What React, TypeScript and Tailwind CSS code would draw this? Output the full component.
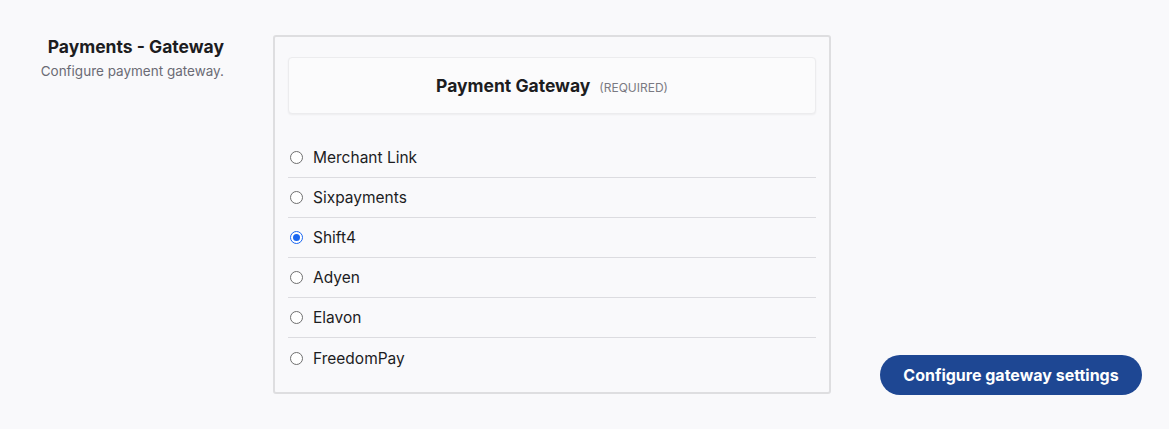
const gateways = ["Merchant Link", "Sixpayments", "Shift4", "Adyen", "Elavon", "FreedomPay"];

const selected = "Shift4";

const Radio = ({ checked }: { checked: boolean }) =>
  checked ? (
    <span className="flex h-[13px] w-[13px] items-center justify-center rounded-full border-[1.5px] border-[#1a66f0] bg-white">
      <span className="h-[7px] w-[7px] rounded-full bg-[#1a66f0]" />
    </span>
  ) : (
    <span className="h-[13px] w-[13px] rounded-full border border-[#6f6f6f] bg-white" />
  );

const App = () => {
  return (
    <div className="min-h-[429px] bg-[#f9f9fb] font-['Inter',sans-serif] text-[#1d1d1f]">
      <div className="flex items-end pt-[35px] pr-[27px]">
        <div className="flex self-start">
          <div className="w-[224px] pt-[1px] text-right">
            <h2 className="text-[17.5px] font-bold leading-[22px] text-[#1d1d1f]">Payments - Gateway</h2>
            <p className="mt-[5px] text-[13.5px] leading-[16px] text-[#6b6b75]">Configure payment gateway.</p>
          </div>
          <div className="ml-[49px] w-[558px] rounded-[3px] border-2 border-[#dedee0] px-[13px] pt-[20px] pb-[14px]">
            <div className="flex h-[57px] items-center justify-center rounded-[4px] border border-[#ececee] bg-[#fbfbfc] shadow-[0_1px_2px_rgba(0,0,0,0.05)]">
              <span className="mt-[2px] text-[17.5px] font-bold text-[#1d1d1f]">Payment Gateway</span>
              <span className="ml-[9px] mt-[4px] text-[12px] text-[#7a7a82]">(REQUIRED)</span>
            </div>
            <div className="mt-[24px]">
              {gateways.map((g, i) => (
                <label
                  key={g}
                  className={`flex h-[40px] items-center gap-[10px] pl-[2px] text-[15.5px] text-[#1d1d1f] ${
                    i < gateways.length - 1 ? "border-b border-[#dcdce0]" : ""
                  }`}
                >
                  <Radio checked={g === selected} />
                  <span className="mt-[1px]">{g}</span>
                </label>
              ))}
            </div>
          </div>
        </div>
        <button className="ml-auto mb-[-1px] h-[40px] w-[262px] rounded-full bg-[#1e4793] text-[16px] font-bold text-white">
          Configure gateway settings
        </button>
      </div>
    </div>
  );
};

export default App;
